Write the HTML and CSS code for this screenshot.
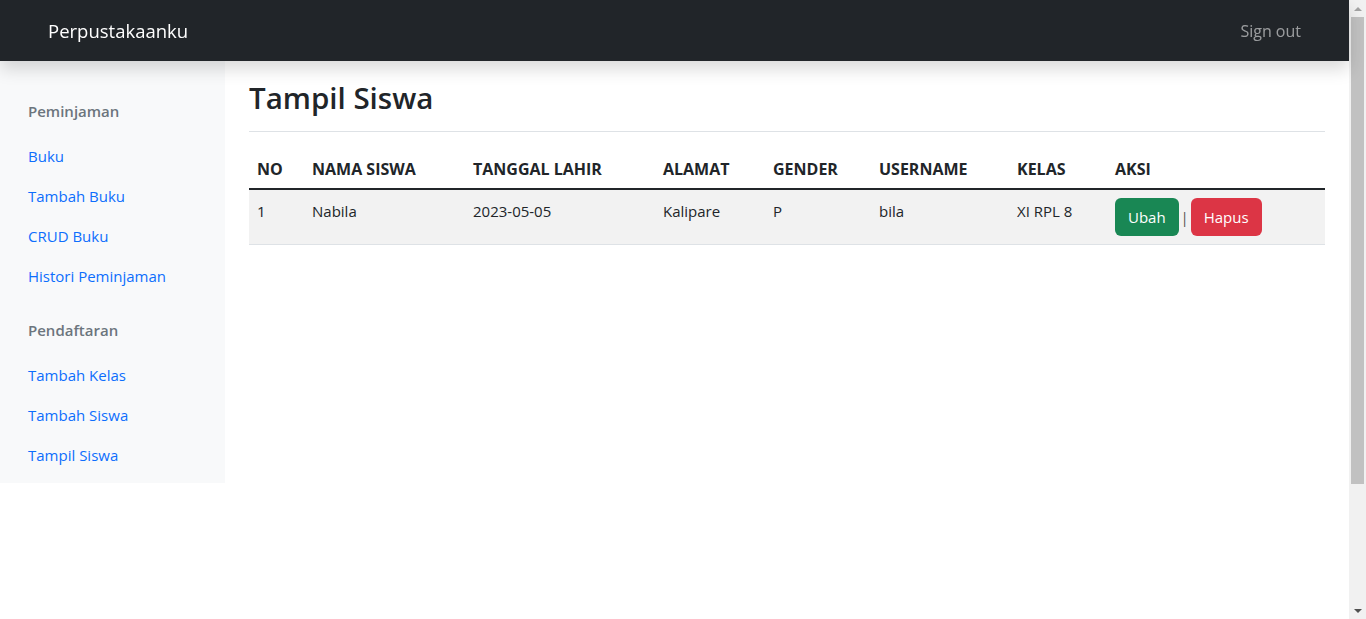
FILE: index.html
```html
<!DOCTYPE html>
<html lang="id">
<head>
<meta charset="utf-8">
<title>Tampil Siswa</title>
<link rel="stylesheet" href="styles.css">
</head>
<body>
<div class="page">
  <header class="navbar">
    <a class="brand" href="#">Perpustakaanku</a>
    <a class="signout" href="#">Sign out</a>
  </header>
  <div class="layout">
    <nav class="sidebar">
      <h6 class="sidebar-heading">Peminjaman</h6>
      <ul class="nav">
        <li><a href="#">Buku</a></li>
        <li><a href="#">Tambah Buku</a></li>
        <li><a href="#">CRUD Buku</a></li>
        <li><a href="#">Histori Peminjaman</a></li>
      </ul>
      <h6 class="sidebar-heading">Pendaftaran</h6>
      <ul class="nav">
        <li><a href="#">Tambah Kelas</a></li>
        <li><a href="#">Tambah Siswa</a></li>
        <li><a href="#">Tampil Siswa</a></li>
      </ul>
    </nav>
    <main class="main">
      <div class="title-bar">
        <h2>Tampil Siswa</h2>
      </div>
      <table class="table">
        <thead>
          <tr>
            <th class="c-no">NO</th>
            <th class="c-nama">NAMA SISWA</th>
            <th class="c-tgl">TANGGAL LAHIR</th>
            <th class="c-alamat">ALAMAT</th>
            <th class="c-gender">GENDER</th>
            <th class="c-user">USERNAME</th>
            <th class="c-kelas">KELAS</th>
            <th class="c-aksi">AKSI</th>
          </tr>
        </thead>
        <tbody>
          <tr>
            <td>1</td>
            <td>Nabila</td>
            <td>2023-05-05</td>
            <td>Kalipare</td>
            <td>P</td>
            <td>bila</td>
            <td>XI RPL 8</td>
            <td class="aksi"><a class="btn btn-success" href="#">Ubah</a><span class="sep">|</span><a class="btn btn-danger" href="#">Hapus</a></td>
          </tr>
        </tbody>
      </table>
    </main>
  </div>
</div>
<div class="scrollbar" aria-hidden="true">
  <div class="sb-btn"><span class="arrow-up"></span></div>
  <div class="sb-track">
    <div class="sb-thumb"></div>
  </div>
  <div class="sb-btn"><span class="arrow-down"></span></div>
</div>
</body>
</html>
```
FILE: styles.css
```css
* { box-sizing: border-box; }
html, body { margin: 0; padding: 0; overflow: hidden; }
body {
  font-family: "Open Sans", "Noto Sans", sans-serif;
  font-size: 15px;
  line-height: 1.5;
  color: #212529;
  background: #fff;
}
a { text-decoration: none; }

.page { margin-right: 17px; }

.navbar {
  position: relative;
  z-index: 2;
  height: 61px;
  background: #212529;
  display: flex;
  align-items: center;
  justify-content: space-between;
  box-shadow: 0 8px 16px rgba(0,0,0,.15);
}
.brand {
  color: #fff;
  font-size: 18.5px;
  padding-left: 48px;
}
.signout {
  color: rgba(255,255,255,.55);
  font-size: 16px;
  padding-right: 48px;
}

.layout { display: flex; align-items: flex-start; }
.sidebar {
  width: 225px;
  flex: none;
  background: #f8f9fa;
  padding: 38px 0 8px;
}
.sidebar-heading {
  margin: 0 0 13px;
  padding: 0 28px;
  font-size: 15px;
  line-height: 24px;
  font-weight: 600;
  color: #6c757d;
}
.nav { list-style: none; margin: 0 0 22px; padding: 0; }
.nav:last-child { margin-bottom: 0; }
.nav a {
  display: block;
  padding: 8px 28px;
  line-height: 24px;
  color: #0d6efd;
}

.main {
  flex: 1;
  padding: 0 24px;
}
.title-bar {
  padding: 18px 0 6px;
  margin-bottom: 16px;
  border-bottom: 1px solid #dee2e6;
}
.title-bar h2 {
  margin: 0 0 8px;
  font-size: 29.5px;
  font-weight: 600;
  line-height: 38px;
}

.table {
  width: 100%;
  border-collapse: collapse;
  table-layout: fixed;
}
.table th, .table td {
  padding: 8px;
  text-align: left;
  vertical-align: top;
  line-height: 24px;
  border-bottom: 1px solid #dee2e6;
}
.table th {
  font-size: 16px;
  font-weight: 700;
  vertical-align: bottom;
  padding-bottom: 7px;
  padding-top: 9px;
  border-bottom: 2px solid #212529;
}
.table td { padding-top: 9px; padding-bottom: 7px; }
.table td.aksi { padding-top: 8px; padding-bottom: 8px; }
.table tbody tr { background: #f2f2f2; }
.c-no { width: 55px; }
.c-nama { width: 161px; }
.c-tgl { width: 190px; }
.c-alamat { width: 110px; }
.c-gender { width: 106px; }
.c-user { width: 138px; }
.c-kelas { width: 98px; }

.btn {
  display: inline-block;
  vertical-align: middle;
  padding: 6px 12px;
  line-height: 24px;
  font-size: 15px;
  color: #fff;
  border-radius: 6px;
  border: 1px solid transparent;
}
.btn-success { background: #198754; }
.btn-danger { background: #dc3545; }
.sep {
  display: inline-block;
  vertical-align: middle;
  width: 12px;
  text-align: center;
  color: #555;
}

.scrollbar {
  position: fixed;
  top: 0;
  right: 0;
  width: 17px;
  height: 100%;
  background: #f1f1f1;
  display: flex;
  flex-direction: column;
}
.sb-btn {
  height: 17px;
  flex: none;
  display: flex;
  align-items: center;
  justify-content: center;
}
.arrow-up, .arrow-down {
  width: 0;
  height: 0;
  border-left: 4px solid transparent;
  border-right: 4px solid transparent;
}
.arrow-up { border-bottom: 4px solid #a3a3a3; }
.arrow-down { border-top: 4px solid #505050; }
.sb-track { flex: 1; padding: 0 2px; }
.sb-thumb {
  height: 467px;
  background: #c1c1c1;
}
```
